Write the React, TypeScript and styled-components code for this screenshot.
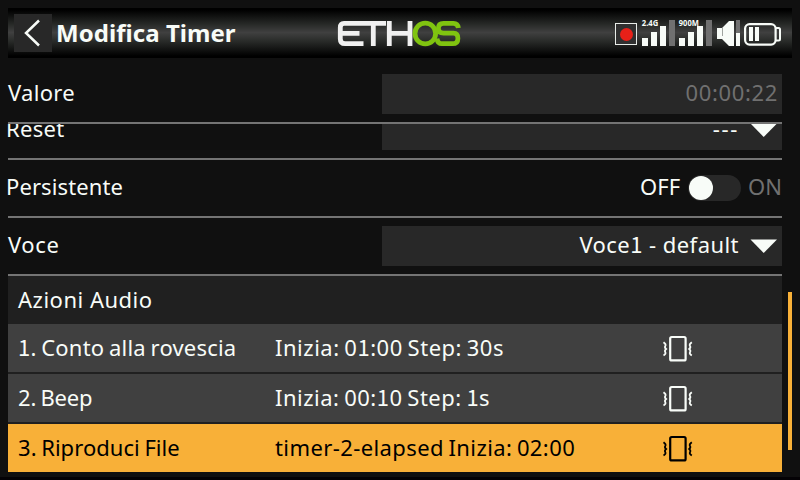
import React from "react";
import styled, { createGlobalStyle } from "styled-components";

const GlobalStyle = createGlobalStyle`
  * { box-sizing: border-box; }
  html, body, #root { height: 100%; }
  body { margin: 0; background: #101010; overflow: hidden; }
`;

const Screen = styled.div`
  width: 800px;
  height: 480px;
  padding-top: 8px;
  display: flex;
  flex-direction: column;
  background: #101010;
  border-bottom: 3px solid #040205;
  color: #f8fcf8;
  font-family: "Noto Sans", sans-serif;
  font-size: 22px;
  overflow: hidden;
`;

const Header = styled.header`
  flex: none;
  height: 50px;
  margin: 0 8px;
  padding: 0 10px 0 6px;
  display: grid;
  grid-template-columns: 322px 1fr auto;
  align-items: center;
  background: linear-gradient(#000 0, #000 4%, #282a28 33%, #404040 49%, #282a28 67%, #000 96%, #000 100%);
`;

const TitleGroup = styled.div`
  display: flex;
  align-items: center;
  gap: 4px;
`;

const BackButton = styled.button`
  width: 38px;
  height: 38px;
  padding: 0;
  border: 0;
  background: #282828;
  display: flex;
`;

const Title = styled.h1`
  margin: 0;
  font-size: 24px;
  line-height: 38px;
  font-weight: 700;
  letter-spacing: 0.05px;
  white-space: nowrap;
`;

const StatusBar = styled.svg`
  display: block;
  font-family: "Noto Sans", sans-serif;
`;

const Form = styled.main`
  flex: none;
  width: 774px;
  margin-left: 8px;
`;

const Label = styled.span<{ $tracking?: number; $gap?: number; $nudge?: number }>`
  line-height: 38px;
  padding-bottom: 2px;
  letter-spacing: ${(p) => p.$tracking ?? 0}px;
  word-spacing: ${(p) => p.$gap ?? 0}px;
  margin-left: ${(p) => p.$nudge ?? 0}px;
  white-space: pre;
`;

const Row = styled.div<{ $height: number; $padTop?: number; $clipped?: boolean }>`
  height: ${(p) => p.$height}px;
  display: grid;
  grid-template-columns: 374px 400px;
  align-items: center;
  align-content: ${(p) => (p.$clipped ? "end" : "center")};
  padding-top: ${(p) => p.$padTop ?? 0}px;
  padding-bottom: ${(p) => (p.$clipped ? 8 : 0)}px;
  border-bottom: 2px solid #747474;
  clip-path: ${(p) => (p.$clipped ? "inset(0 0 0 -4px)" : "none")};

  ${Label} {
    line-height: 36px;
    padding-bottom: 4px;
  }
`;

const Field = styled.div<{ $muted?: boolean }>`
  height: 40px;
  padding: 0 4px 0 0;
  display: flex;
  align-items: center;
  justify-content: flex-end;
  gap: 11px;
  background: #282828;
  color: ${(p) => (p.$muted ? "#707070" : "#f8fcf8")};
`;

const Caret = styled.svg`
  flex: none;
  display: block;
`;

const ToggleGroup = styled.div`
  display: flex;
  align-items: center;
  justify-content: flex-end;
  gap: 8px;
`;

const Track = styled.span`
  width: 53px;
  height: 26px;
  margin-right: -1px;
  border-radius: 13px;
  background: #282828;
  display: flex;
  align-items: center;
`;

const Knob = styled.span`
  width: 24px;
  height: 24px;
  margin-left: 1px;
  border-radius: 12px;
  background: #f8fcf8;
`;

const MutedLabel = styled(Label)`
  color: #707070;
`;

const Body = styled.div`
  display: flex;
`;

const Section = styled.div`
  height: 48px;
  padding-left: 10px;
  display: flex;
  align-items: center;
  background: #202020;
`;

const List = styled.div`
  display: grid;
  gap: 2px;
  background: #202020;
`;

const Item = styled.div<{ $active?: boolean }>`
  height: 48px;
  padding-left: 10px;
  display: grid;
  grid-template-columns: 257px 387px 1fr;
  align-items: center;
  background: ${(p) => (p.$active ? "#f8b038" : "#404040")};
  color: ${(p) => (p.$active ? "#000" : "#f8fcf8")};
`;

const Scrollbar = styled.div`
  width: 4px;
  height: 158px;
  margin: 234px 0 0 6px;
  background: #f8b038;
`;

const FootedOne = styled.span`
  font-family: "Noto Sans CJK SC", sans-serif;
  line-height: 1;
`;

const withOnes = (text: string) =>
  text.split(/(1)/).map((part, i) => (part === "1" ? <FootedOne key={i}>1</FootedOne> : part));

const DownCaret = () => (
  <Caret width="28" height="14" viewBox="0 0 28 14">
    <path d="M0.5 0.5H27L13.7 14Z" fill="#f8fcf8" />
  </Caret>
);

const VibrateIcon = () => (
  <Caret width="32" height="28" viewBox="0 0 32 28" fill="none" stroke="currentColor">
    <rect x="8.2" y="3" width="15.4" height="23.4" rx="1.5" strokeWidth="2.2" />
    <path d="M1.5 8.2q3 2.2 1.8 3.8q-1 1.5 .8 3q-1.8 1.4-.8 3.2q1 1.5-1.8 3.2M29.8 8.2q-3 2.2-1.8 3.8q1 1.5-.8 3q1.8 1.4 .8 3.2q-1 1.5 1.8 3.2" strokeWidth="1.8" />
  </Caret>
);

const Logo = () => (
  <svg width="126" height="28" viewBox="0 0 126 28" fill="none" strokeWidth="4.8">
    <g stroke="#f0f0f0">
      <path d="M50 4.3H8Q4.3 4.3 4.3 8.5V20Q4.3 24.7 9 24.7H27.5M4.3 14.3H23.5M37.3 4.3V27" />
      <path d="M53.3 2V27M74 2V27M53.3 14.3H74" />
    </g>
    <g stroke="#80c410">
      <ellipse cx="89.3" cy="14.5" rx="10.3" ry="10.4" />
      <path d="M122.4 9Q121.8 4.3 117.5 4.3H107.5Q102.4 4.3 102.4 9.3Q102.4 14.2 107.5 14.2H117.5Q121.9 14.2 121.9 19.4Q121.9 24.7 116.5 24.7H106Q101.5 24.7 101 19.4" />
    </g>
  </svg>
);

const statusIcons = (
  <StatusBar width="168" height="50" viewBox="614 8 168 50">
    <rect x="615.5" y="23.5" width="21" height="21" fill="#303030" stroke="#e8ece8" />
    <circle cx="626.5" cy="34.5" r="6.5" fill="#e82018" />
    <path d="M669 20h6v26h-6zM706 20h6v26h-6zM736 20h4v13h-4z" fill="#707070" />
    <g fill="#f8fcf8">
      <path d="M642 38h6v8h-6zM651 32h6v14h-6zM660 26h6v20h-6zM679 38h6v8h-6zM688 32h6v14h-6zM697 26h6v20h-6zM736 33h4v13h-4z" />
      <path d="M717 28h5l7-7h5v25h-5l-7-7h-5z" />
      <path d="M749 27h4v14h-4zM755 27h4v14h-4z" />
    </g>
    <path d="M722.5 28v8" stroke="#a0a4a0" />
    <g fill="none" stroke="#f8fcf8" strokeWidth="2.2">
      <rect x="745.1" y="24.1" width="30.5" height="20.5" rx="4.5" />
      <path d="M776 28h2.5q1.5 0 1.5 1.5v9.5q0 1.5-1.5 1.5h-2.5" strokeWidth="2" />
    </g>
    <g fill="#f8fcf8" fontSize="8.2" fontWeight="700">
      <text x="641.8" y="26" textLength="16.5" lengthAdjust="spacingAndGlyphs">2.4G</text>
      <text x="678.8" y="26" textLength="20" lengthAdjust="spacingAndGlyphs">900M</text>
    </g>
  </StatusBar>
);

const actions = [
  { name: "1. Conto alla rovescia", nameTracking: 0.2, detail: "Inizia: 01:00 Step: 30s", detailTracking: 0.52 },
  { name: "2. Beep", nameTracking: -0.2, detail: "Inizia: 00:10 Step: 1s", detailTracking: 0.5 },
  { name: "3. Riproduci File", nameTracking: 0.05, detail: "timer-2-elapsed Inizia: 02:00", detailTracking: 0.4, active: true },
];

export default function App() {
  return (
    <Screen>
      <GlobalStyle />
      <Header>
        <TitleGroup>
          <BackButton aria-label="Indietro">
            <svg width="38" height="38" viewBox="0 0 38 38">
              <path d="M25 6.5L12 19L25 31.5" fill="none" stroke="#f8fcf8" strokeWidth="2.5" />
            </svg>
          </BackButton>
          <Title>Modifica Timer</Title>
        </TitleGroup>
        <Logo />
        {statusIcons}
      </Header>
      <Body>
        <Form>
          <Row $height={66} $padTop={8}>
            <Label $tracking={0.3}>Valore</Label>
            <Field $muted><Label $tracking={0.65}>00:00:22</Label></Field>
          </Row>
          <Row $height={36} $clipped>
            <Label $tracking={0.3} $nudge={-2}>Reset</Label>
            <Field><Label $tracking={1.7}>---</Label><DownCaret /></Field>
          </Row>
          <Row $height={58}>
            <Label $tracking={0.1} $nudge={-2}>Persistente</Label>
            <ToggleGroup>
              <Label>OFF</Label>
              <Track><Knob /></Track>
              <MutedLabel>ON</MutedLabel>
            </ToggleGroup>
          </Row>
          <Row $height={58}>
            <Label $tracking={0.6}>Voce</Label>
            <Field><Label $tracking={0.45}>{withOnes("Voce1 - default")}</Label><DownCaret /></Field>
          </Row>
          <Section><Label $tracking={0.5}>Azioni Audio</Label></Section>
          <List>
            {actions.map((a) => (
              <Item key={a.name} $active={a.active}>
                <Label $tracking={a.nameTracking} $gap={-1.2}>{withOnes(a.name)}</Label>
                <Label $tracking={a.detailTracking} $gap={-1.5}>{withOnes(a.detail)}</Label>
                <VibrateIcon />
              </Item>
            ))}
          </List>
        </Form>
        <Scrollbar />
      </Body>
    </Screen>
  );
}
